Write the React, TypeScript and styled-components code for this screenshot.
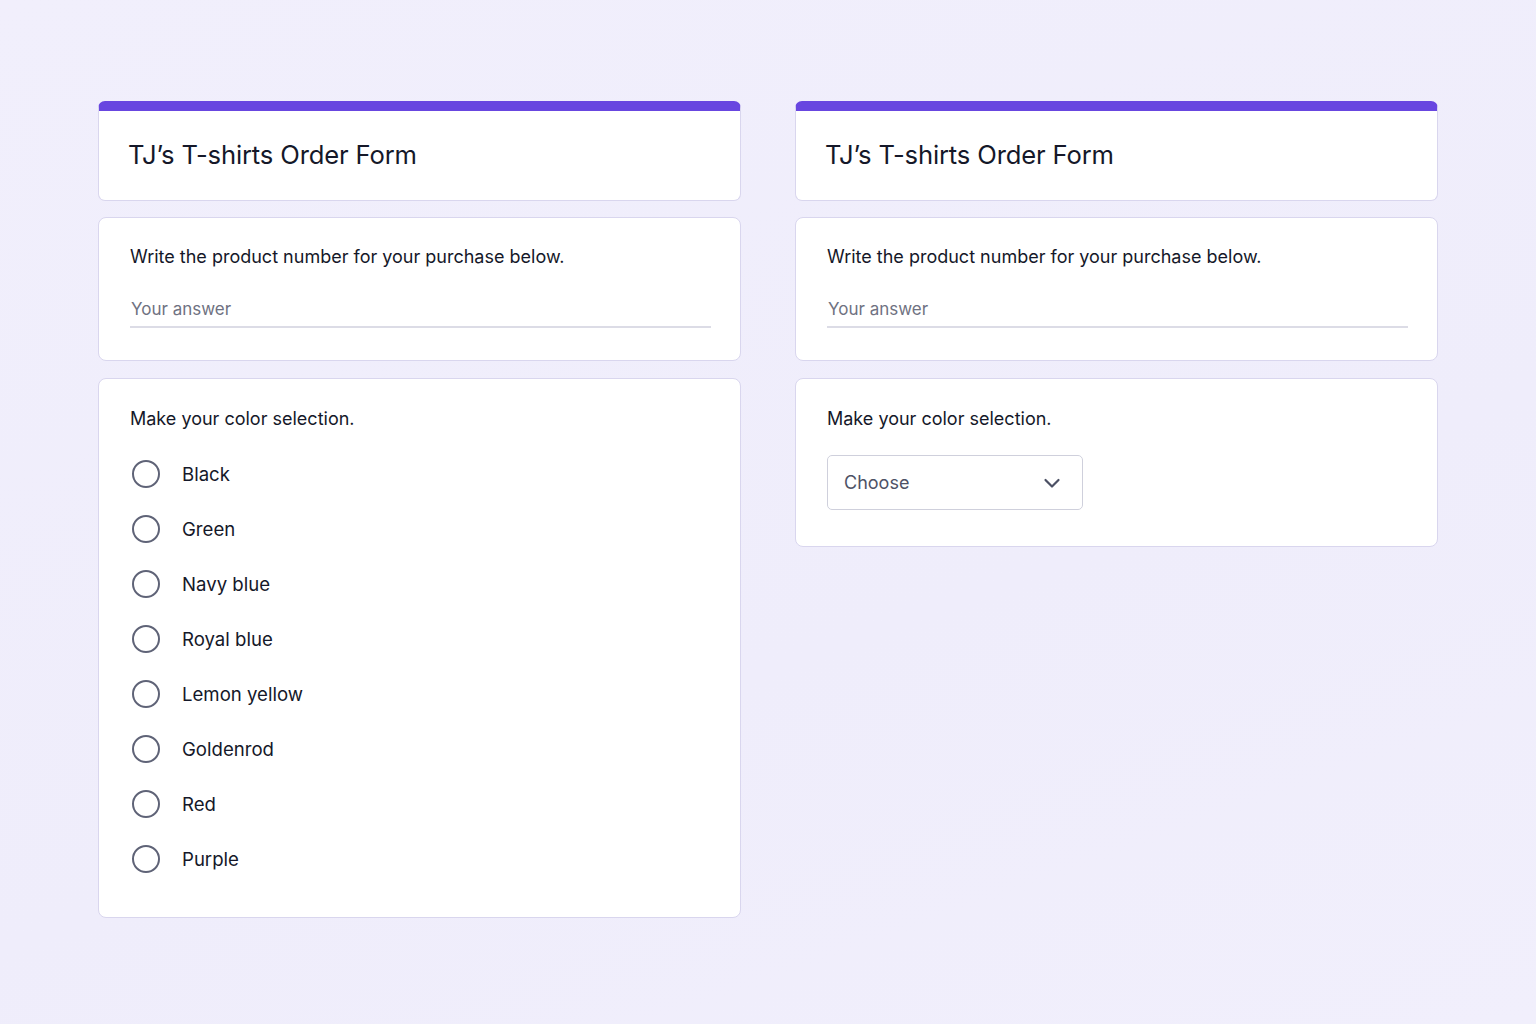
import React from "react";
import styled, { createGlobalStyle } from "styled-components";

const Global = createGlobalStyle`
  html, body { margin: 0; padding: 0; }
  body {
    background: #f0edfc;
    font-family: Inter, "Noto Sans", "Liberation Sans", sans-serif;
    color: #151829;
  }
`;

const Page = styled.div`
  width: 1536px;
  height: 1024px;
  box-sizing: border-box;
  padding: 101px 98px 0 98px;
  display: grid;
  grid-template-columns: 643px 643px;
  column-gap: 54px;
  align-items: start;
  background: linear-gradient(160deg, #f1effc 0%, #efedfb 60%, #f1effc 100%);
`;

const Column = styled.div`
  display: flex;
  flex-direction: column;
`;

const Card = styled.div<{ $mt?: number }>`
  background: #ffffff;
  border: 1px solid #d9d6ee;
  border-radius: 8px;
  box-sizing: border-box;
  margin-top: ${(p) => p.$mt ?? 0}px;
  overflow: hidden;
`;

const HeaderCard = styled(Card)`
  height: 100px;
  border-top: 10px solid #6846e0;
  border-radius: 7px;
  padding: 28px 29px 0;
`;

const Title = styled.h1`
  margin: 0;
  font-size: 25.6px;
  font-weight: 400;
  letter-spacing: -0.15px;
  line-height: 32px;
  color: #151829;
`;

const QuestionCard = styled(Card)<{ $h: number; $pt: number }>`
  height: ${(p) => p.$h}px;
  padding: ${(p) => p.$pt}px 30px 0 31px;
`;

const Question = styled.div`
  font-size: 18px;
  line-height: 24px;
  color: #151829;
`;

const Answer = styled.div`
  margin-top: 28px;
  width: 580px;
  padding-left: 1px;
  padding-bottom: 5px;
  border-bottom: 2px solid #dcdce6;
  font-size: 17px;
  line-height: 24px;
  color: #6f7282;
`;

const Options = styled.div`
  margin-top: 29px;
  display: flex;
  flex-direction: column;
  gap: 27px;
`;

const Option = styled.label`
  display: flex;
  align-items: center;
  gap: 22px;
  height: 28px;
  padding-left: 2px;
  font-size: 18.6px;
  color: #151829;
`;

const Radio = styled.span`
  width: 28px;
  height: 28px;
  box-sizing: border-box;
  border: 2px solid #5f6377;
  border-radius: 50%;
  flex: none;
`;

const Select = styled.div`
  margin-top: 24px;
  width: 256px;
  height: 55px;
  box-sizing: border-box;
  border: 1px solid #cfd0dc;
  border-radius: 5px;
  display: flex;
  align-items: center;
  justify-content: space-between;
  padding: 0 20px 0 16px;
  font-size: 18px;
  color: #4e5266;
`;

const colors = [
  "Black",
  "Green",
  "Navy blue",
  "Royal blue",
  "Lemon yellow",
  "Goldenrod",
  "Red",
  "Purple",
];

const Header = () => (
  <HeaderCard>
    <Title>TJ’s T-shirts Order Form</Title>
  </HeaderCard>
);

const ProductQuestion = () => (
  <QuestionCard $mt={16} $h={144} $pt={27}>
    <Question>Write the product number for your purchase below.</Question>
    <Answer>Your answer</Answer>
  </QuestionCard>
);

export default function App() {
  return (
    <>
      <Global />
      <Page>
        <Column>
          <Header />
          <ProductQuestion />
          <QuestionCard $mt={17} $h={540} $pt={28}>
            <Question>Make your color selection.</Question>
            <Options>
              {colors.map((c) => (
                <Option key={c}>
                  <Radio />
                  {c}
                </Option>
              ))}
            </Options>
          </QuestionCard>
        </Column>
        <Column>
          <Header />
          <ProductQuestion />
          <QuestionCard $mt={17} $h={169} $pt={28}>
            <Question>Make your color selection.</Question>
            <Select>
              <span>Choose</span>
              <svg width="20" height="20" viewBox="0 0 20 20" fill="none">
                <path
                  d="M3.5 7l6.5 6.5L16.5 7"
                  stroke="#4b5064"
                  strokeWidth="2.2"
                  strokeLinecap="round"
                  strokeLinejoin="round"
                />
              </svg>
            </Select>
          </QuestionCard>
        </Column>
      </Page>
    </>
  );
}
